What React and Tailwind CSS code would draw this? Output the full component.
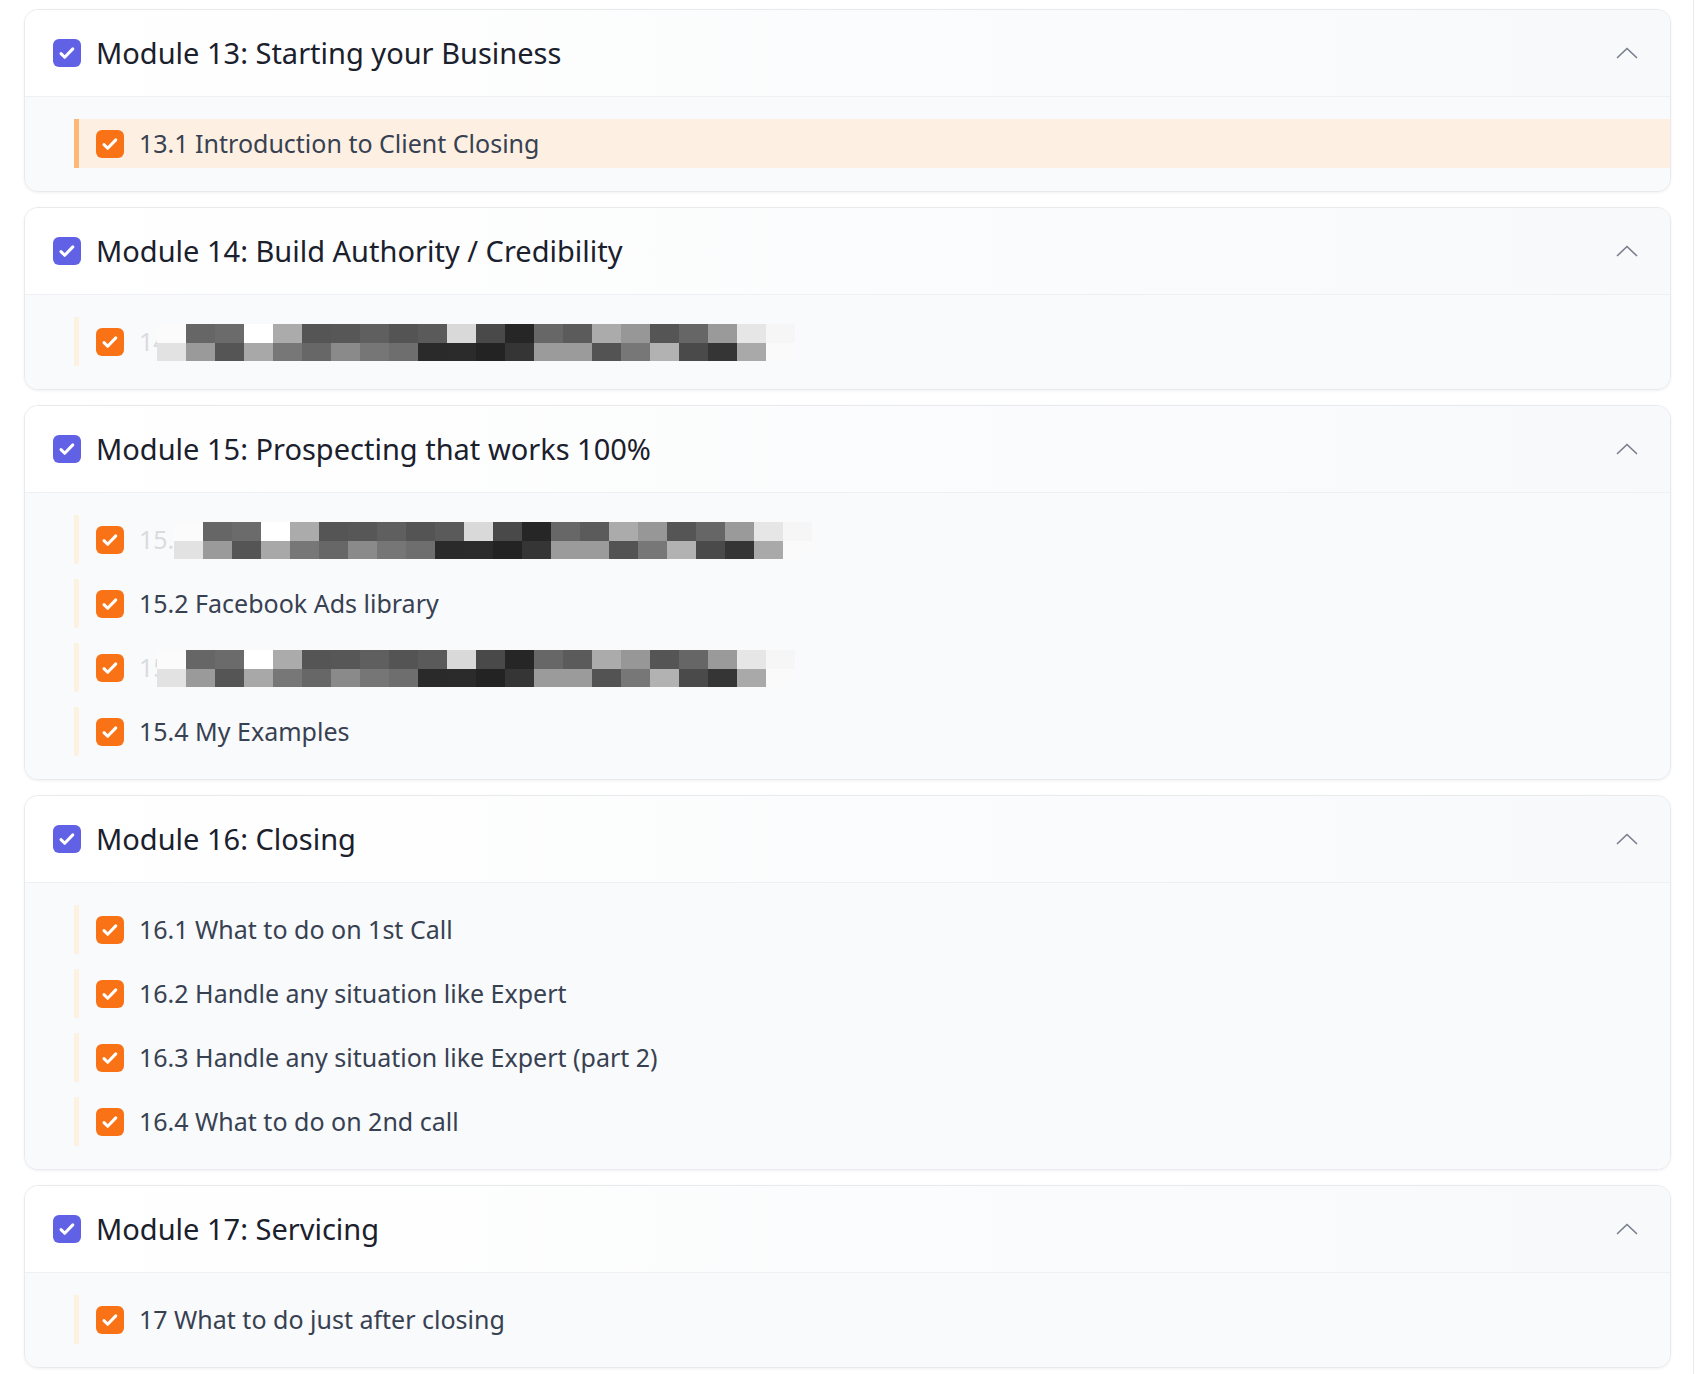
import React from 'react';

// pixelated cover used over hidden lesson titles: [top, bottom] per column
const MOSAIC = [
  ['bg-[#fbfbfb]', 'bg-[#e2e2e2]'],
  ['bg-[#666666]', 'bg-[#9a9a9a]'],
  ['bg-[#6b6b6b]', 'bg-[#555555]'],
  ['bg-[#ffffff]', 'bg-[#a8a8a8]'],
  ['bg-[#ababab]', 'bg-[#777777]'],
  ['bg-[#555555]', 'bg-[#676767]'],
  ['bg-[#575757]', 'bg-[#8a8a8a]'],
  ['bg-[#5f5f5f]', 'bg-[#767676]'],
  ['bg-[#545454]', 'bg-[#6e6e6e]'],
  ['bg-[#5a5a5a]', 'bg-[#2a2a2a]'],
  ['bg-[#d9d9d9]', 'bg-[#2b2b2b]'],
  ['bg-[#494949]', 'bg-[#232323]'],
  ['bg-[#262626]', 'bg-[#353535]'],
  ['bg-[#676767]', 'bg-[#9b9b9b]'],
  ['bg-[#5b5b5b]', 'bg-[#9b9b9b]'],
  ['bg-[#ababab]', 'bg-[#535353]'],
  ['bg-[#979797]', 'bg-[#777777]'],
  ['bg-[#555555]', 'bg-[#b2b2b2]'],
  ['bg-[#666666]', 'bg-[#4a4a4a]'],
  ['bg-[#9a9a9a]', 'bg-[#353535]'],
  ['bg-[#e6e6e6]', 'bg-[#a9a9a9]'],
  ['bg-[#f6f6f6]', 'bg-[#fafafa]'],
];

const modules = [
  {
    title: 'Module 13: Starting your Business',
    lessons: [{ label: '13.1 Introduction to Client Closing', active: true }],
  },
  {
    title: 'Module 14: Build Authority / Credibility',
    lessons: [{ label: '14', hidden: true }],
  },
  {
    title: 'Module 15: Prospecting that works 100%',
    lessons: [
      { label: '15.', hidden: true, shift: true },
      { label: '15.2 Facebook Ads library' },
      { label: '15', hidden: true },
      { label: '15.4 My Examples' },
    ],
  },
  {
    title: 'Module 16: Closing',
    lessons: [
      { label: '16.1 What to do on 1st Call' },
      { label: '16.2 Handle any situation like Expert' },
      { label: '16.3 Handle any situation like Expert (part 2)' },
      { label: '16.4 What to do on 2nd call' },
    ],
  },
  {
    title: 'Module 17: Servicing',
    lessons: [{ label: '17 What to do just after closing' }],
  },
];

function Check({ className }) {
  return (
    <span className={`flex h-[28px] w-[28px] shrink-0 items-center justify-center rounded-[6px] ${className}`}>
      <svg width="20" height="20" viewBox="0 0 20 20" fill="none">
        <path d="M4 10.6l3.7 3.7 8.1-8.4" stroke="white" strokeWidth="3" strokeLinecap="round" strokeLinejoin="round" />
      </svg>
    </span>
  );
}

function Mosaic() {
  return (
    <div className="flex">
      {MOSAIC.map(([top, bottom], i) => (
        <div key={i} className="flex w-[29px] flex-col">
          <div className={`h-[19px] ${top}`} />
          <div className={`h-[18px] ${bottom}`} />
        </div>
      ))}
    </div>
  );
}

function Lesson({ lesson }) {
  return (
    <div className={`flex h-[49px] items-center ${lesson.active ? 'bg-[#fdf0e2]' : ''}`}>
      <div className={`h-full w-[5px] ${lesson.active ? 'bg-[#fdb877]' : 'bg-[#fdf1e1]'}`} />
      <Check className="ml-[17px] bg-[#f97316]" />
      {lesson.hidden ? (
        <div className="relative ml-[15px] flex h-full items-center">
          <span className="text-[25px] text-[#d9dbdf]">{lesson.label}</span>
          <div className={`absolute top-[7px] ${lesson.shift ? 'left-[35px]' : 'left-[18px]'}`}>
            <Mosaic />
          </div>
        </div>
      ) : (
        <span className="ml-[15px] text-[25px] text-[#374151]">{lesson.label}</span>
      )}
    </div>
  );
}

function ModuleCard({ module }) {
  return (
    <div className="overflow-hidden rounded-[14px] border border-[#e8eaee] bg-white shadow-[0_1px_3px_rgba(15,23,42,0.06)]">
      <div className="flex h-[86px] items-center justify-between bg-gradient-to-r from-white to-[#f8f9fb] pl-[28px] pr-[24px]">
        <div className="flex items-center gap-[15px]">
          <Check className="bg-[#6161e6]" />
          <span className="text-[29px] text-[#1a202c]">{module.title}</span>
        </div>
        <button className="flex h-[38px] w-[38px] items-center justify-center rounded-lg">
          <svg width="22" height="12" viewBox="0 0 22 12" fill="none">
            <path d="M1.5 10.5L11 1.5l9.5 9" stroke="#7b8190" strokeWidth="1.7" strokeLinecap="round" strokeLinejoin="round" />
          </svg>
        </button>
      </div>
      <div className="flex flex-col gap-[15px] border-t border-[#eef0f4] bg-[#f9fafc] pb-[23px] pl-[49px] pt-[22px]">
        {module.lessons.map((lesson, i) => (
          <Lesson key={i} lesson={lesson} />
        ))}
      </div>
    </div>
  );
}

export default function App() {
  return (
    <div className="min-h-screen bg-white font-['Noto_Sans',sans-serif]">
      <div className="w-[1694px] border-r border-[#e9ebef] pb-[6px] pl-[24px] pr-[22px] pt-[9px]">
        <div className="flex flex-col gap-[15px]">
          {modules.map((m) => (
            <ModuleCard key={m.title} module={m} />
          ))}
        </div>
      </div>
    </div>
  );
}
